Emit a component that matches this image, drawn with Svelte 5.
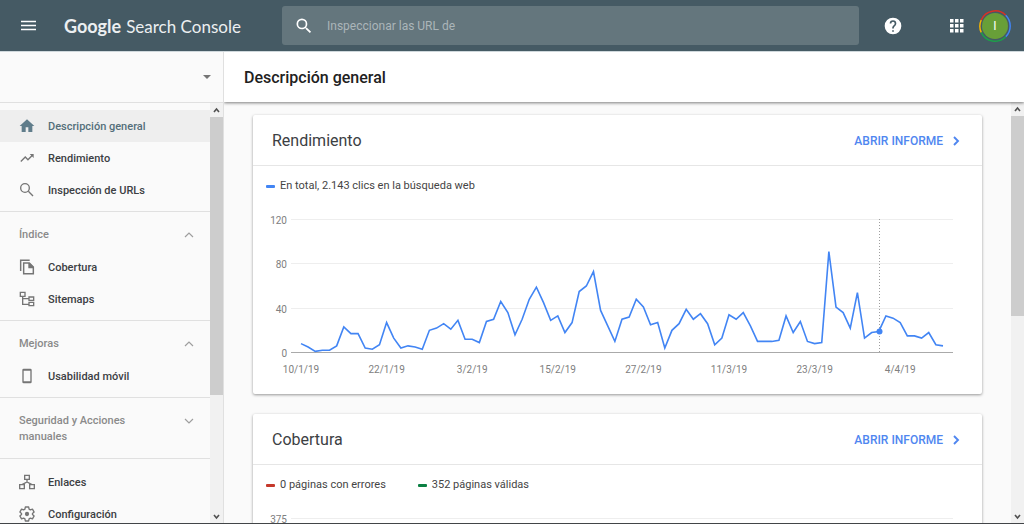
<script>
	let plotWidth = $state(729);

	const sections = [
		{
			items: [
				{ label: 'Descripción general', icon: 'home', active: true },
				{ label: 'Rendimiento', icon: 'trend' },
				{ label: 'Inspección de URLs', icon: 'search' }
			]
		},
		{
			title: 'Índice',
			open: true,
			items: [
				{ label: 'Cobertura', icon: 'pages' },
				{ label: 'Sitemaps', icon: 'tree' }
			]
		},
		{
			title: 'Mejoras',
			open: true,
			items: [{ label: 'Usabilidad móvil', icon: 'phone' }]
		},
		{ title: 'Seguridad y Acciones manuales', open: false, items: [] },
		{
			items: [
				{ label: 'Enlaces', icon: 'links' },
				{ label: 'Configuración', icon: 'gear' }
			]
		}
	];

	// Daily clicks, starting on 10/1/19
	const clicks = [
		8, 5, 1, 2, 2, 6, 23, 17, 17, 4, 3, 7, 27, 13, 4, 6, 5, 3, 20, 22, 26, 21, 29, 12, 12, 9, 28, 30,
		46, 36, 16, 30, 48, 59, 45, 29, 33, 18, 27, 55, 60, 73, 38, 24, 10, 30, 32, 48, 41, 25, 27, 4,
		20, 26, 39, 30, 35, 26, 7, 13, 34, 30, 36, 24, 10, 10, 10, 11, 33, 18, 28, 10, 8, 9, 91, 41, 36,
		22, 54, 13, 18, 19, 33, 31, 27, 15, 15, 13, 18, 7, 6
	];
	const dates = ['10/1/19', '22/1/19', '3/2/19', '15/2/19', '27/2/19', '11/3/19', '23/3/19', '4/4/19'];
	const marker = 81;

	const cards = [
		{
			title: 'Rendimiento',
			legend: [{ text: 'En total, 2.143 clics en la búsqueda web', color: 'blue' }],
			ticks: [120, 80, 40, 0],
			dates,
			values: clicks
		},
		{
			title: 'Cobertura',
			legend: [
				{ text: '0 páginas con errores', color: 'red' },
				{ text: '352 páginas válidas', color: 'green' }
			],
			ticks: [375],
			dates: [],
			values: []
		}
	];

	const top = 25;
	const base = 158;

	function xAt(day) {
		return 48 + (day * (plotWidth - 87)) / (clicks.length - 1);
	}

	function yAt(value, max) {
		return base + 0.5 - (value / max) * (base - top);
	}

	let points = $derived(clicks.map((v, i) => `${xAt(i)},${yAt(v, 120)}`).join(' '));
</script>

{#snippet icon(name)}
	<svg class="icon" viewBox="0 0 24 24" width="16" height="16" aria-hidden="true">
		{#if name === 'home'}
			<path fill="currentColor" d="M10 21v-7h4v7h6v-9h3L12 2 1 12h3v9z" />
		{:else if name === 'trend'}
			<path fill="currentColor" d="M16 6l2.29 2.29-4.88 4.88-4-4L2 16.59 3.41 18l6-6 4 4 6.3-6.29L22 12V6z" />
		{:else if name === 'search'}
			<circle cx="9" cy="9" r="6.5" fill="none" stroke="currentColor" stroke-width="2" />
			<path fill="none" stroke="currentColor" stroke-width="2" d="M14 14l7 7" />
		{:else if name === 'pages'}
			<path fill="none" stroke="currentColor" stroke-width="2.2" d="M2.5 18V2H16M7 6h8.500l6 6v10H7z" />
			<path fill="currentColor" d="M14 6h2l6 6v2h-8z" />
		{:else if name === 'tree'}
			<path fill="none" stroke="currentColor" stroke-width="2" d="M2 2h7v6H2zM15 9h7v5h-7zM15 17h7v5h-7zM5.500 8v12H15M5.500 11.500H15" />
		{:else if name === 'phone'}
			<path fill="currentColor" fill-rule="evenodd" d="M7 1h10a2 2 0 0 1 2 2v18a2 2 0 0 1-2 2H7a2 2 0 0 1-2-2V3a2 2 0 0 1 2-2zm0 3v16h10V4z" />
		{:else if name === 'links'}
			<path fill="none" stroke="currentColor" stroke-width="2" d="M8.500 2h7v6h-7zM1 16h7v6H1zM16 16h7v6h-7zM12 8v4M4.500 16L12 12l7.500 4" />
		{:else if name === 'gear'}
			<path
				fill="none"
				stroke="currentColor"
				stroke-width="2"
				stroke-linejoin="round"
				d="M9.500 1.500h5l.6 3.200 2 1.200 3.100-1.100 2.500 4.300-2.500 2.100v1.600l2.500 2.100-2.500 4.300-3.100-1.100-2 1.200-.6 3.200h-5l-.6-3.200-2-1.200-3.100 1.100-2.500-4.300 2.500-2.100v-1.600L1.300 9.100l2.500-4.300 3.100 1.100 2-1.200z"
			/>
			<circle cx="12" cy="12" r="3.200" fill="currentColor" />
		{/if}
	</svg>
{/snippet}

{#snippet scrollbar(size)}
	<div class="scrollbar" aria-hidden="true">
		<svg viewBox="0 0 13 14" width="13" height="14"><path d="M4 9l2.500-3L9 9" /></svg>
		<div class="track"><div class="thumb {size}"></div></div>
		<svg viewBox="0 0 13 14" width="13" height="14"><path d="M4 6l2.500 3L9 6" /></svg>
	</div>
{/snippet}

<div class="app">
	<header class="topbar">
		<div class="brand">
			<button class="icon-btn" aria-label="Menú">
				<svg viewBox="0 0 16 12" width="16" height="12">
					<path stroke="currentColor" stroke-width="1.500" d="M0 1.500h15M0 5.500h15M0 9.500h15" />
				</svg>
			</button>
			<a class="logo" href="#inicio"><b>Google</b><span>Search Console</span></a>
		</div>
		<label class="search">
			<svg viewBox="0 0 24 24" width="20" height="20" aria-hidden="true">
				<path
					fill="currentColor"
					d="M15.500 14h-.79l-.28-.27A6.470 6.470 0 0 0 16 9.500 6.500 6.500 0 1 0 9.500 16c1.610 0 3.090-.59 4.230-1.570l.27.28v.79l5 4.990L20.490 19zm-6 0a4.500 4.500 0 1 1 0-9 4.500 4.500 0 0 1 0 9z"
				/>
			</svg>
			<input type="text" placeholder="Inspeccionar las URL de" aria-label="Inspeccionar URL" />
		</label>
		<div class="tools">
			<button class="icon-btn help" aria-label="Ayuda">
				<svg viewBox="0 0 24 24" width="20" height="20">
					<path
						fill="currentColor"
						d="M12 2a10 10 0 1 0 0 20 10 10 0 0 0 0-20zm1 17h-2v-2h2zm2.070-7.750l-.9.920C13.450 12.900 13 13.500 13 15h-2v-.5c0-1.100.45-2.100 1.170-2.830l1.240-1.260c.37-.36.59-.86.59-1.410a2 2 0 0 0-4 0H8a4 4 0 0 1 8 0c0 .88-.36 1.680-.93 2.250z"
					/>
				</svg>
			</button>
			<button class="icon-btn" aria-label="Aplicaciones">
				<svg viewBox="0 0 14 14" width="14" height="14">
					<path
						fill="currentColor"
						d="M0 0h3.500v3.500H0zM5 0h3.500v3.500H5zM10 0h3.500v3.500H10zM0 5h3.500v3.500H0zM5 5h3.500v3.500H5zM10 5h3.500v3.500H10zM0 10h3.500v3.500H0zM5 10h3.500v3.500H5zM10 10h3.500v3.500H10z"
					/>
				</svg>
			</button>
			<button class="avatar" aria-label="Cuenta">
				<svg viewBox="0 0 32 32" width="32" height="32" aria-hidden="true">
					<g fill="none" stroke-width="1.500">
						<path stroke="#d93025" d="M2.200 10A15.200 15.200 0 0 1 26.700 5.200" />
						<path stroke="#4285f4" d="M26.700 5.200A15.200 15.200 0 0 1 26.700 26.800" />
						<path stroke="#1e9e4a" d="M26.700 26.800A15.200 15.200 0 0 1 2.200 22.400" />
						<path stroke="#f4b400" d="M2.200 22.400A15.200 15.200 0 0 1 2.200 10" />
					</g>
					<circle cx="16" cy="16" r="13" fill="#689f38" />
					<text x="16" y="20" text-anchor="middle">I</text>
				</svg>
			</button>
		</div>
	</header>

	<div class="body">
		<aside class="sidebar">
			<button class="property" aria-label="Seleccionar propiedad">
				<svg viewBox="0 0 8 4" width="8" height="4"><path fill="#757575" d="M0 0h8L4 4z" /></svg>
			</button>
			<div class="scroll-row">
				<nav>
					{#each sections as section}
						<div class="section">
							{#if section.title}
								<button class="section-title" aria-expanded={section.open}>
									<span>{section.title}</span>
									<svg viewBox="0 0 10 16" width="10" height="16" aria-hidden="true">
										<path d={section.open ? 'M1 10l4-4 4 4' : 'M1 6l4 4 4-4'} />
									</svg>
								</button>
							{/if}
							{#each section.items as item}
								<a class="item" class:active={item.active} href="#{item.icon}">
									{@render icon(item.icon)}
									{item.label}
								</a>
							{/each}
						</div>
					{/each}
				</nav>
				{@render scrollbar('long')}
			</div>
		</aside>

		<main>
			<div class="page-title">
				<h1>Descripción general</h1>
			</div>
			<div class="scroll-row">
				<div class="content">
					{#each cards as card}
						<section class="card">
							<div class="card-header">
								<h2>{card.title}</h2>
								<a href="#informe">
									Abrir informe
									<svg viewBox="0 0 7 10" width="7" height="10" aria-hidden="true">
										<path fill="none" stroke="currentColor" stroke-width="1.900" d="M1 1l4 4-4 4" />
									</svg>
								</a>
							</div>
							<ul class="legend">
								{#each card.legend as entry}
									<li><i class={entry.color}></i>{entry.text}</li>
								{/each}
							</ul>
							<div class="plot" bind:clientWidth={plotWidth}>
								<svg width={plotWidth} height="200" role="img" aria-label={card.title}>
									{#each card.ticks as tick}
										{@const y = Math.floor(yAt(tick, card.ticks[0])) + 0.5}
										<line class="grid" class:axis={tick === 0} x1="38" x2={plotWidth - 29} y1={y} y2={y} />
										<text x="34" y={y + 4} text-anchor="end">{tick}</text>
									{/each}
									{#each card.dates as date, i}
										<text x={xAt(i * 12)} y="179" text-anchor="middle">{date}</text>
									{/each}
									{#if card.values.length}
										{@const x = Math.round(xAt(marker)) + 0.5}
										<line class="cursor" x1={x} x2={x} y1={top} y2={base} />
										<polyline {points} />
										<circle cx={x} cy={yAt(card.values[marker], 120)} r="3" />
									{/if}
								</svg>
							</div>
						</section>
					{/each}
				</div>
				{@render scrollbar('half')}
			</div>
		</main>
	</div>
</div>

<style>
	:global(body) {
		margin: 0;
		font-family: Roboto, sans-serif;
		color: #212121;
	}

	button {
		border: 0;
		padding: 0;
		background: none;
		font: inherit;
		color: inherit;
		cursor: pointer;
	}

	a {
		color: inherit;
		text-decoration: none;
	}

	svg {
		display: block;
		flex: none;
	}

	.app {
		height: 100vh;
		box-sizing: border-box;
		display: flex;
		flex-direction: column;
		overflow: hidden;
		background: #fafafa;
		border-bottom: 1px solid #424548;
	}

	/* Top bar */
	.topbar {
		flex: none;
		display: grid;
		grid-template-columns: 282px 1fr 165px;
		align-items: center;
		height: 51px;
		background: #455a64;
		border-bottom: 1px solid #cfd8dc;
		color: #fff;
	}

	.brand {
		display: flex;
		align-items: center;
		gap: 27px;
		padding-left: 21px;
	}

	.logo {
		display: flex;
		align-items: baseline;
		gap: 5px;
		font-family: Lato, sans-serif;
		font-size: 17px;
		color: #eceff1;
		white-space: nowrap;
	}

	.logo b {
		font-size: 18px;
		font-weight: 700;
	}

	.search {
		display: flex;
		align-items: center;
		gap: 13px;
		height: 39px;
		padding: 0 12px;
		border-radius: 3px;
		background: #64767d;
	}

	.search input {
		flex: 1;
		min-width: 0;
		border: 0;
		padding: 0;
		outline: none;
		background: none;
		color: #fff;
		font: 12px Roboto, sans-serif;
	}

	.search input::placeholder {
		color: #abb5b9;
	}

	.tools {
		display: flex;
		align-items: center;
		justify-content: flex-end;
		gap: 15px;
		padding-right: 13px;
	}

	.help {
		margin-right: 32px;
	}

	.avatar text {
		font-size: 12px;
		fill: #fff;
	}

	/* Sidebar */
	.body {
		flex: 1;
		min-height: 0;
		display: flex;
	}

	.sidebar {
		flex: none;
		width: 223px;
		display: flex;
		flex-direction: column;
		border-right: 1px solid #e0e0e0;
	}

	.property {
		flex: none;
		display: flex;
		align-items: center;
		justify-content: flex-end;
		height: 51px;
		padding-right: 12px;
		border-bottom: 1px solid #e0e0e0;
	}

	.scroll-row {
		flex: 1;
		min-height: 0;
		display: flex;
	}

	nav {
		flex: 1;
		overflow: hidden;
	}

	.section {
		padding: 7px 0 5px;
		border-bottom: 1px solid #e0e0e0;
	}

	.section-title {
		display: flex;
		justify-content: space-between;
		width: 100%;
		padding: 8px 16px 8px 19px;
		font-size: 11px;
		line-height: 16px;
		font-weight: 500;
		color: #8a8a8a;
		text-align: left;
	}

	.section-title span {
		max-width: 120px;
	}

	.section-title path {
		fill: none;
		stroke: #9e9e9e;
		stroke-width: 1.2;
	}

	.item {
		display: flex;
		align-items: center;
		gap: 13px;
		height: 32px;
		padding-left: 19px;
		font-size: 11px;
		font-weight: 500;
		color: #3c4043;
	}

	.icon {
		color: #757575;
	}

	.item.active {
		background: #eee;
		color: #546e7a;
	}

	.item.active .icon {
		color: #607d8b;
	}

	/* Scrollbars */
	.scrollbar {
		flex: none;
		display: flex;
		flex-direction: column;
		width: 13px;
		background: #f1f1f1;
	}

	.scrollbar path {
		fill: none;
		stroke: #505050;
		stroke-width: 1.6;
	}

	.track {
		flex: 1;
	}

	.thumb {
		background: #cdcdcd;
	}

	.long {
		height: 71%;
	}

	.half {
		height: 51%;
	}

	/* Main column */
	main {
		flex: 1;
		min-width: 0;
		display: flex;
		flex-direction: column;
	}

	.page-title {
		flex: none;
		position: relative;
		display: flex;
		align-items: center;
		height: 50px;
		padding: 0 20px;
		background: #fff;
		box-shadow: 0 1px 3px rgba(0, 0, 0, 0.5);
		clip-path: inset(0 0 -8px 0);
	}

	h1 {
		margin: 0;
		font-size: 16px;
		font-weight: 500;
	}

	.content {
		flex: 1;
		min-width: 0;
		display: flex;
		flex-direction: column;
		gap: 20px;
		padding: 13px 29px;
		overflow: hidden;
	}

	.card {
		flex: none;
		background: #fff;
		border-radius: 2px;
		box-shadow: 0 1px 3px rgba(0, 0, 0, 0.4);
	}

	.card-header {
		display: flex;
		align-items: center;
		justify-content: space-between;
		height: 49px;
		padding: 1px 22px 0 19px;
		border-bottom: 1px solid #e6e6e6;
	}

	h2 {
		margin: 0;
		font-size: 16px;
		font-weight: 400;
		color: #3c4043;
	}

	.card-header a {
		display: flex;
		align-items: center;
		gap: 10px;
		font-size: 12px;
		line-height: 16px;
		font-weight: 500;
		text-transform: uppercase;
		color: #4f86f0;
	}

	.legend {
		display: flex;
		gap: 32px;
		margin: 0;
		padding: 12px 13px 0;
		list-style: none;
		font-size: 11px;
		line-height: 16px;
		color: #444;
	}

	.legend li {
		display: flex;
		align-items: center;
		gap: 5px;
	}

	.legend i {
		width: 9px;
		height: 3px;
		border-radius: 1px;
	}

	.blue {
		background: #4285f4;
	}

	.red {
		background: #c5382b;
	}

	.green {
		background: #0b8043;
	}

	.plot text {
		font-size: 10px;
		fill: #808080;
	}

	.grid {
		stroke: #eee;
	}

	.axis {
		stroke: #aaa;
	}

	.cursor {
		stroke: #9e9e9e;
		stroke-dasharray: 1 2;
	}

	.plot polyline {
		fill: none;
		stroke: #4285f4;
		stroke-width: 1.6;
	}

	.plot circle {
		fill: #4285f4;
	}
</style>
